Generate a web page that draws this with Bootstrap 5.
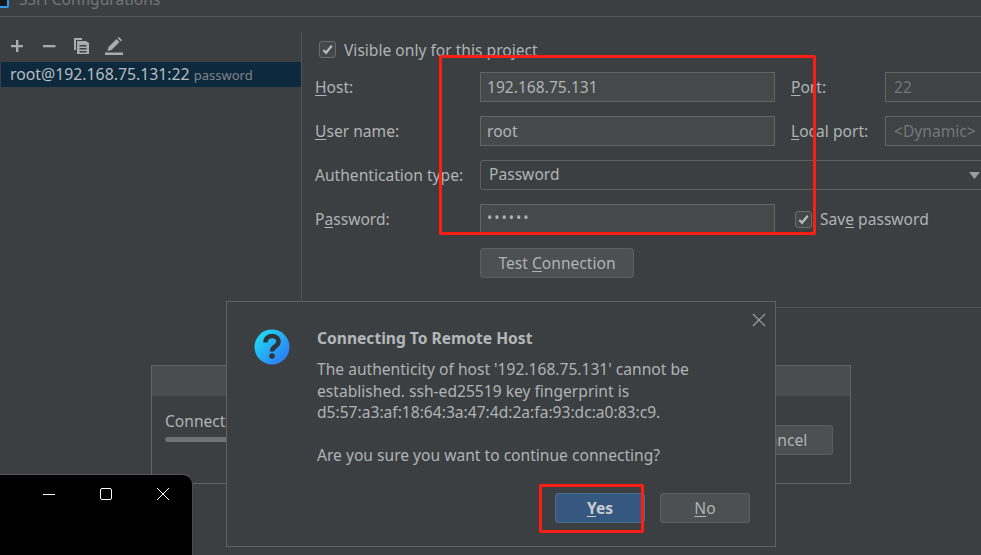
<!DOCTYPE html>
<html lang="en">
<head>
    <meta charset="UTF-8">
    <meta name="viewport" content="width=device-width, initial-scale=1.0">
    <title>SSH Configurations</title>
    <link href="https://cdn.jsdelivr.net/npm/bootstrap@5.3.2/dist/css/bootstrap.min.css" rel="stylesheet">
    <style>
        html, body { height: 100%; }
        body {
            background: #3c3f41;
            color: #b0b3b5;
            font-family: "Noto Sans", "Liberation Sans", sans-serif;
            font-size: 15.6px;
            line-height: 20px;
            overflow: hidden;
        }
        .ide-window { position: relative; width: 981px; height: 555px; overflow: hidden; }
        u { text-underline-offset: 2px; }

        /* title bar, cut off by the top of the picture */
        .ide-title { height: 17px; border-bottom: 1px solid #525456; overflow: hidden; padding-left: 19px; color: #73767a; position: relative; }
        .ide-title span { display: block; margin-top: -11px; }
        .ide-title i { position: absolute; left: -3px; top: -6px; width: 12px; height: 14px; border: 2px solid #2f9be8; background: #15191c; border-radius: 2px; }

        .ide-body { height: 538px; padding-top: 15px; }
        .side-panel { width: 302px; border-right: 1px solid #515355; flex: none; height: 275px; }
        .side-tools { height: 30px; padding: 0 0 2px 9px; gap: 16px; }
        .side-item { height: 25px; margin-left: 1px; background: #0d293e; color: #b9bcbe; padding-left: 9px; line-height: 25px; white-space: nowrap; font-size: 15.8px; }
        .side-item small { color: #808487; font-size: 13px; }

        .form-pane { padding: 9px 0 0 13px; flex: none; width: 700px; }
        .check-line { height: 17px; margin: 0 0 14px 4px; }
        .form-check-input.ide-check {
            width: 17px; height: 17px; margin: 0 8px 0 0; flex: none; float: none;
            background-color: #43494a; border: 1px solid #6b6b6b; border-radius: 3px;
            background-size: 15px;
            background-image: url("data:image/svg+xml,%3csvg xmlns='http://www.w3.org/2000/svg' viewBox='0 0 16 16'%3e%3cpath fill='none' stroke='%23b8babc' stroke-width='2.4' d='M3.5 8.5l3 3 6-7.5'/%3e%3c/svg%3e");
        }
        .form-check-input.ide-check.save-check { margin-left: 20px; }
        .field-row { display: flex; align-items: center; height: 30px; margin-bottom: 14px; }
        .field-label { width: 165px; flex: none; white-space: nowrap; margin: 0; }
        .form-control.ide-input, .form-select.ide-input {
            background-color: #45494a; border: 1px solid #646464; border-radius: 0; height: 30px; min-height: 30px;
            padding: 0 6px; color: #b0b3b5; font-size: 15.6px; box-shadow: none; flex: none;
        }
        .ide-input.wide { width: 295px; }
        .form-control.ide-input.dots { font-size: 14px; letter-spacing: 2px; padding-bottom: 4px; }
        .side-label { width: 94px; margin-left: 16px; flex: none; white-space: nowrap; }
        .form-control.ide-input.short { width: 100px; color: #74777a; background-color: #3f4344; padding-left: 8px; }
        .form-select.ide-input {
            width: 520px; border-color: #5e6060; background-color: #3c3f41; border-radius: 3px; padding-left: 8px;
            background-position: right 19px center; background-size: 11px 7px;
            background-image: url("data:image/svg+xml,%3csvg xmlns='http://www.w3.org/2000/svg' viewBox='0 0 11 7'%3e%3cpath fill='%239a9c9e' d='M0 0h11L5.500 7z'/%3e%3c/svg%3e");
        }
        .btn.ide-btn {
            background: #4c5052; border: 1px solid #5e6060; border-radius: 3px; color: #b0b3b5;
            height: 30px; padding: 0; font-size: 15.6px; line-height: 28px; text-align: center;
        }
        .btn.ide-primary { background: #365880; border-color: #4c708c; color: #c8ccce; font-weight: 700; }
        .test-btn { width: 154px; margin: 12px 0 0 165px; display: block; }
        .form-rule { position: absolute; left: 775px; right: 0; top: 307px; border-top: 1px solid #515355; }

        /* stacked windows */
        .back-dialog { position: absolute; left: 151px; top: 365px; width: 700px; height: 119px; border: 1px solid #626466; background: #3c3f41; }
        .back-head { height: 30px; background: #4a4d50; }
        .back-body { padding: 15px 13px 0; position: relative; }
        .back-bar { height: 5px; width: 200px; border-radius: 3px; background: #6f7173; margin-top: 6px; }
        .back-cancel { position: absolute; right: 17px; top: 29px; width: 100px; }
        .front-dialog { position: absolute; left: 226px; top: 301px; width: 550px; height: 246px; background: #3c3f41; border: 1px solid #5f6163; }
        .dlg-close { position: absolute; left: 525px; top: 11px; display: block; line-height: 0; }
        .dlg-icon { position: absolute; left: 27px; top: 27px; display: block; line-height: 0; }
        .dlg-text { padding: 25px 0 0 90px; line-height: 21.500px; }
        .dlg-text h5 { font-size: 15.6px; font-weight: 700; line-height: 22px; margin: 0 0 10px; color: #b4b7b9; }
        .dlg-text p { margin: 0 0 21px; }
        .dlg-buttons { position: absolute; left: 328px; top: 191px; gap: 15px; }
        .dlg-buttons .btn { width: 90px; }

        .term-window { position: absolute; left: 0; top: 474px; width: 193px; height: 90px; background: #000; border-radius: 0 10px 0 0; border-top: 1px solid #56585a; border-right: 1px solid #4a4c4e; }
        .term-window svg { position: absolute; top: 13px; }

        .red-mark { position: absolute; border: 3px solid #fa1e14; border-radius: 2px; pointer-events: none; }
        .mark-form { left: 439px; top: 55px; width: 377px; height: 180px; }
        .mark-yes { left: 539px; top: 484px; width: 105px; height: 49px; }
    </style>
</head>
<body>
<div class="ide-window">
    <div class="ide-title"><i></i><span>SSH Configurations</span></div>

    <div class="ide-body d-flex">
        <div class="side-panel">
            <div class="side-tools d-flex align-items-center">
                <svg width="16" height="16" viewBox="0 0 16 16"><path fill="#a9abad" d="M7 2h2.400v5H14v2.300H9.400V14H7V9.300H2V7h5z"/></svg>
                <svg width="16" height="16" viewBox="0 0 16 16"><path fill="#a9abad" d="M2 7h12.500v2.300H2z"/></svg>
                <svg width="16" height="18" viewBox="0 0 16 18"><path fill="#a9abad" d="M1 1h8v2H3v10H1z"/><path fill="#a9abad" fill-rule="evenodd" d="M4 4h9l3 2v11H4zM6.500 8v1.500h7V8zm0 3v1.500h7V11zm0 3v1.500h7V14z"/></svg>
                <svg width="18" height="18" viewBox="0 0 18 18"><path fill="#a9abad" d="M0 15.500h18V18H0zM2.500 14l1-4L11.500 2l3 3-8 8zM12.500 1l1.500-1 3 3-1 1.500z"/></svg>
            </div>
            <div class="side-item">root@192.168.75.131:22 <small>password</small></div>
        </div>

        <div class="form-pane">
            <div class="check-line d-flex align-items-center">
                <input class="form-check-input ide-check" type="checkbox" id="visibleOnly" checked>
                <label for="visibleOnly" class="text-nowrap">Visible only for this project</label>
            </div>
            <div class="field-row">
                <label class="field-label" for="host"><u>H</u>ost:</label>
                <input class="form-control ide-input wide" id="host" value="192.168.75.131">
                <label class="side-label" for="port"><u>P</u>ort:</label>
                <input class="form-control ide-input short" id="port" value="22" disabled>
            </div>
            <div class="field-row">
                <label class="field-label" for="user"><u>U</u>ser name:</label>
                <input class="form-control ide-input wide" id="user" value="root">
                <label class="side-label" for="local"><u>L</u>ocal port:</label>
                <input class="form-control ide-input short" id="local" value="&lt;Dynamic&gt;" disabled>
            </div>
            <div class="field-row">
                <label class="field-label" for="auth">Authentication type:</label>
                <select class="form-select ide-input" id="auth"><option>Password</option></select>
            </div>
            <div class="field-row">
                <label class="field-label" for="pass">P<u>a</u>ssword:</label>
                <input class="form-control ide-input wide dots" id="pass" type="password" value="123456">
                <input class="form-check-input ide-check save-check" type="checkbox" id="savePass" checked>
                <label for="savePass" class="text-nowrap">Sav<u>e</u> password</label>
            </div>
            <button type="button" class="btn ide-btn test-btn">Test <u>C</u>onnection</button>
        </div>
    </div>
    <div class="form-rule"></div>

    <div class="back-dialog">
        <div class="back-head"></div>
        <div class="back-body">
            <div>Connecting</div>
            <div class="back-bar"></div>
            <button type="button" class="btn ide-btn back-cancel">Cancel</button>
        </div>
    </div>

    <div class="term-window">
        <svg style="left:43px" width="12" height="12" viewBox="0 0 12 12"><path stroke="#fff" d="M0 6.500h12"/></svg>
        <svg style="left:100px" width="12" height="12" viewBox="0 0 12 12"><rect x=".5" y=".5" width="11" height="11" rx="1.500" fill="none" stroke="#fff"/></svg>
        <svg style="left:157px" width="12" height="12" viewBox="0 0 12 12"><path stroke="#fff" d="M0 0l12 12M12 0L0 12"/></svg>
    </div>

    <div class="front-dialog">
        <span class="dlg-close"><svg width="14" height="14" viewBox="0 0 14 14"><path stroke="#a0a2a4" stroke-width="1.200" fill="none" d="M1 1l12 12M13 1L1 13"/></svg></span>
        <span class="dlg-icon">
            <svg width="36" height="36" viewBox="0 0 36 36">
                <defs><linearGradient id="qGrad" x1="0" y1="0" x2="1" y2="1"><stop offset="0" stop-color="#1de9f2"/><stop offset="1" stop-color="#2f6bf5"/></linearGradient></defs>
                <circle cx="18" cy="18" r="17.500" fill="url(#qGrad)"/>
                <path fill="none" stroke="#30343a" stroke-width="4.500" d="M11.500 13.500c0-9 13.500-8 13-.5-.3 4.500-6.500 4.500-6.500 9.500"/>
                <circle cx="18" cy="27" r="2.800" fill="#30343a"/>
            </svg>
        </span>
        <div class="dlg-text">
            <h5>Connecting To Remote Host</h5>
            <p>The authenticity of host '192.168.75.131' cannot be<br>established. ssh-ed25519 key fingerprint is<br>d5:57:a3:af:18:64:3a:47:4d:2a:fa:93:dc:a0:83:c9.</p>
            <p>Are you sure you want to continue connecting?</p>
        </div>
        <div class="dlg-buttons d-flex">
            <button type="button" class="btn ide-btn ide-primary"><u>Y</u>es</button>
            <button type="button" class="btn ide-btn"><u>N</u>o</button>
        </div>
    </div>

    <div class="red-mark mark-form"></div>
    <div class="red-mark mark-yes"></div>
</div>
<script src="https://cdn.jsdelivr.net/npm/bootstrap@5.3.2/dist/js/bootstrap.bundle.min.js"></script>
</body>
</html>
